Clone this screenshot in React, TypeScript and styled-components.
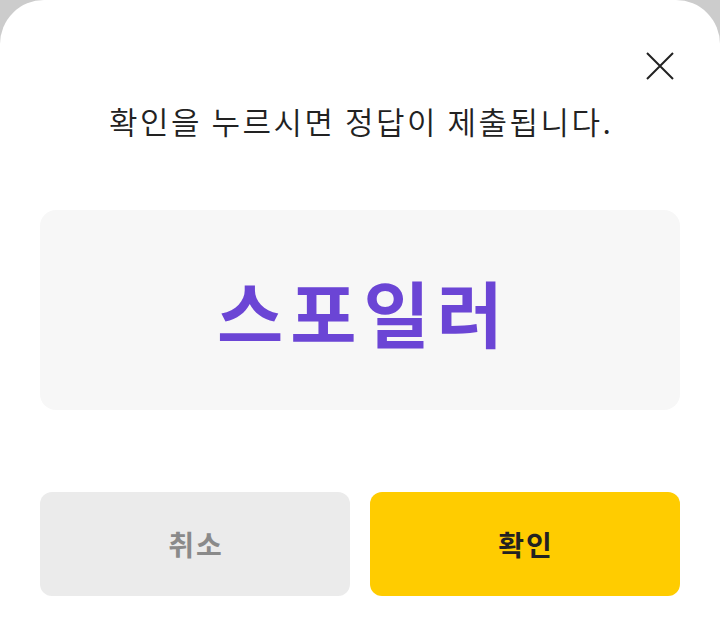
import styled, { createGlobalStyle } from "styled-components";

const GlobalStyle = createGlobalStyle`
  html, body {
    margin: 0;
    padding: 0;
    background: #cccccc;
  }
  body {
    font-family: "Noto Sans CJK KR", "Noto Sans", sans-serif;
  }
`;

const Sheet = styled.div`
  position: relative;
  box-sizing: border-box;
  width: 720px;
  height: 624px;
  background: #ffffff;
  border-top-left-radius: 44px;
  border-top-right-radius: 44px;
  padding: 93px 40px 0;
  display: flex;
  flex-direction: column;
`;

const CloseButton = styled.button`
  position: absolute;
  top: 50px;
  right: 44px;
  width: 32px;
  height: 32px;
  padding: 0;
  border: none;
  background: none;
  display: flex;
  align-items: center;
  justify-content: center;
  cursor: pointer;
`;

const Message = styled.p`
  margin: 0;
  text-align: center;
  font-size: 31px;
  line-height: 56px;
  font-weight: 350;
  color: #222222;
  letter-spacing: 2.5px;
  text-indent: 2.5px;
`;

const SpoilerBox = styled.div`
  margin-top: 61px;
  height: 200px;
  background: #f7f7f7;
  border-radius: 16px;
  display: flex;
  align-items: center;
  justify-content: center;
`;

const SpoilerText = styled.span`
  font-size: 72px;
  font-weight: 700;
  color: #6b45d5;
  letter-spacing: 7px;
  padding-left: 7px;
`;

const Actions = styled.div`
  margin-top: 82px;
  display: grid;
  grid-template-columns: 1fr 1fr;
  gap: 20px;
`;

const ActionButton = styled.button<{ $primary?: boolean }>`
  height: 104px;
  border: none;
  border-radius: 12px;
  font-family: inherit;
  font-size: 28px;
  font-weight: 700;
  letter-spacing: 2px;
  text-indent: 2px;
  background: ${p => (p.$primary ? "#ffcc00" : "#ebebeb")};
  color: ${p => (p.$primary ? "#222222" : "#8a8a8a")};
  cursor: pointer;
`;

export default function App() {
  return (
    <>
      <GlobalStyle />
      <Sheet>
        <CloseButton aria-label="닫기">
          <svg width="28" height="28" viewBox="0 0 28 28">
            <path d="M1 1L27 27M27 1L1 27" stroke="#222" strokeWidth="2" fill="none" />
          </svg>
        </CloseButton>
        <Message>확인을 누르시면 정답이 제출됩니다.</Message>
        <SpoilerBox>
          <SpoilerText>스포일러</SpoilerText>
        </SpoilerBox>
        <Actions>
          <ActionButton>취소</ActionButton>
          <ActionButton $primary>확인</ActionButton>
        </Actions>
      </Sheet>
    </>
  );
}
